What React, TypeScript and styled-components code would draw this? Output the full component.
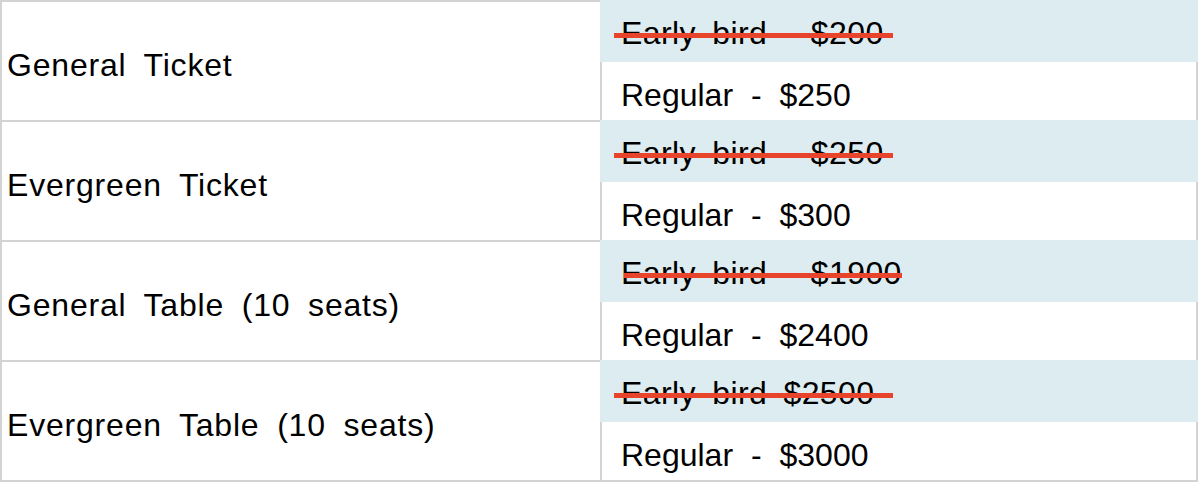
import React from "react";
import styled, { createGlobalStyle } from "styled-components";

const GlobalStyle = createGlobalStyle`
  html, body {
    margin: 0;
    padding: 0;
    background: #ffffff;
  }
  * { box-sizing: border-box; }
`;

const BORDER = "#d3d3d3";

const Table = styled.div`
  width: 1198px;
  display: flex;
  flex-direction: column;
  font-family: "Liberation Sans", Arial, sans-serif;
  font-size: 32px;
  line-height: 32px;
  color: #000;
`;

const Row = styled.div`
  display: grid;
  grid-template-columns: 600px 1fr;
`;

const NameCell = styled.div<{ $last?: boolean }>`
  display: flex;
  align-items: center;
  height: ${(p) => (p.$last ? 122 : 120)}px;
  padding: 7px 0 0 5px;
  letter-spacing: 0.8px;
  word-spacing: 8px;
  border-left: 2px solid ${BORDER};
  border-top: 2px solid ${BORDER};
  border-bottom: ${(p) => (p.$last ? `2px solid ${BORDER}` : "none")};
`;

const PriceCell = styled.div`
  display: flex;
  flex-direction: column;
`;

const EarlyRow = styled.div`
  position: relative;
  height: 62px;
  padding: 17px 0 0 21px;
  letter-spacing: 0.4px;
  word-spacing: 7px;
  background: #ddecf1;
`;

const RegularRow = styled.div<{ $last?: boolean }>`
  height: ${(p) => (p.$last ? 60 : 58)}px;
  padding: 17px 0 0 19px;
  letter-spacing: 0px;
  word-spacing: 9px;
  background: #ffffff;
  border-left: 2px solid ${BORDER};
  border-right: 2px solid ${BORDER};
  border-bottom: ${(p) => (p.$last ? `2px solid ${BORDER}` : "none")};
`;

const StrikeLine = styled.span`
  position: absolute;
  top: 33px;
  height: 4.5px;
  background: #e8432b;
`;

type Item = {
  name: string;
  early: string;
  regular: string;
  strikeLeft: number;
  strikeWidth: number;
};

const items: Item[] = [
  { name: "General Ticket", early: "Early bird - $200", regular: "Regular - $250", strikeLeft: 14, strikeWidth: 279 },
  { name: "Evergreen Ticket", early: "Early bird - $250", regular: "Regular - $300", strikeLeft: 14, strikeWidth: 279 },
  { name: "General Table (10 seats)", early: "Early bird - $1900", regular: "Regular - $2400", strikeLeft: 24, strikeWidth: 278 },
  { name: "Evergreen Table (10 seats)", early: "Early bird $2500", regular: "Regular - $3000", strikeLeft: 14, strikeWidth: 279 },
];

export default function App() {
  return (
    <>
      <GlobalStyle />
      <Table>
        {items.map((it, i) => {
          const last = i === items.length - 1;
          return (
            <Row key={it.name}>
              <NameCell $last={last}>{it.name}</NameCell>
              <PriceCell>
                <EarlyRow>
                  {it.early}
                  <StrikeLine style={{ left: it.strikeLeft, width: it.strikeWidth }} />
                </EarlyRow>
                <RegularRow $last={last}>{it.regular}</RegularRow>
              </PriceCell>
            </Row>
          );
        })}
      </Table>
    </>
  );
}
